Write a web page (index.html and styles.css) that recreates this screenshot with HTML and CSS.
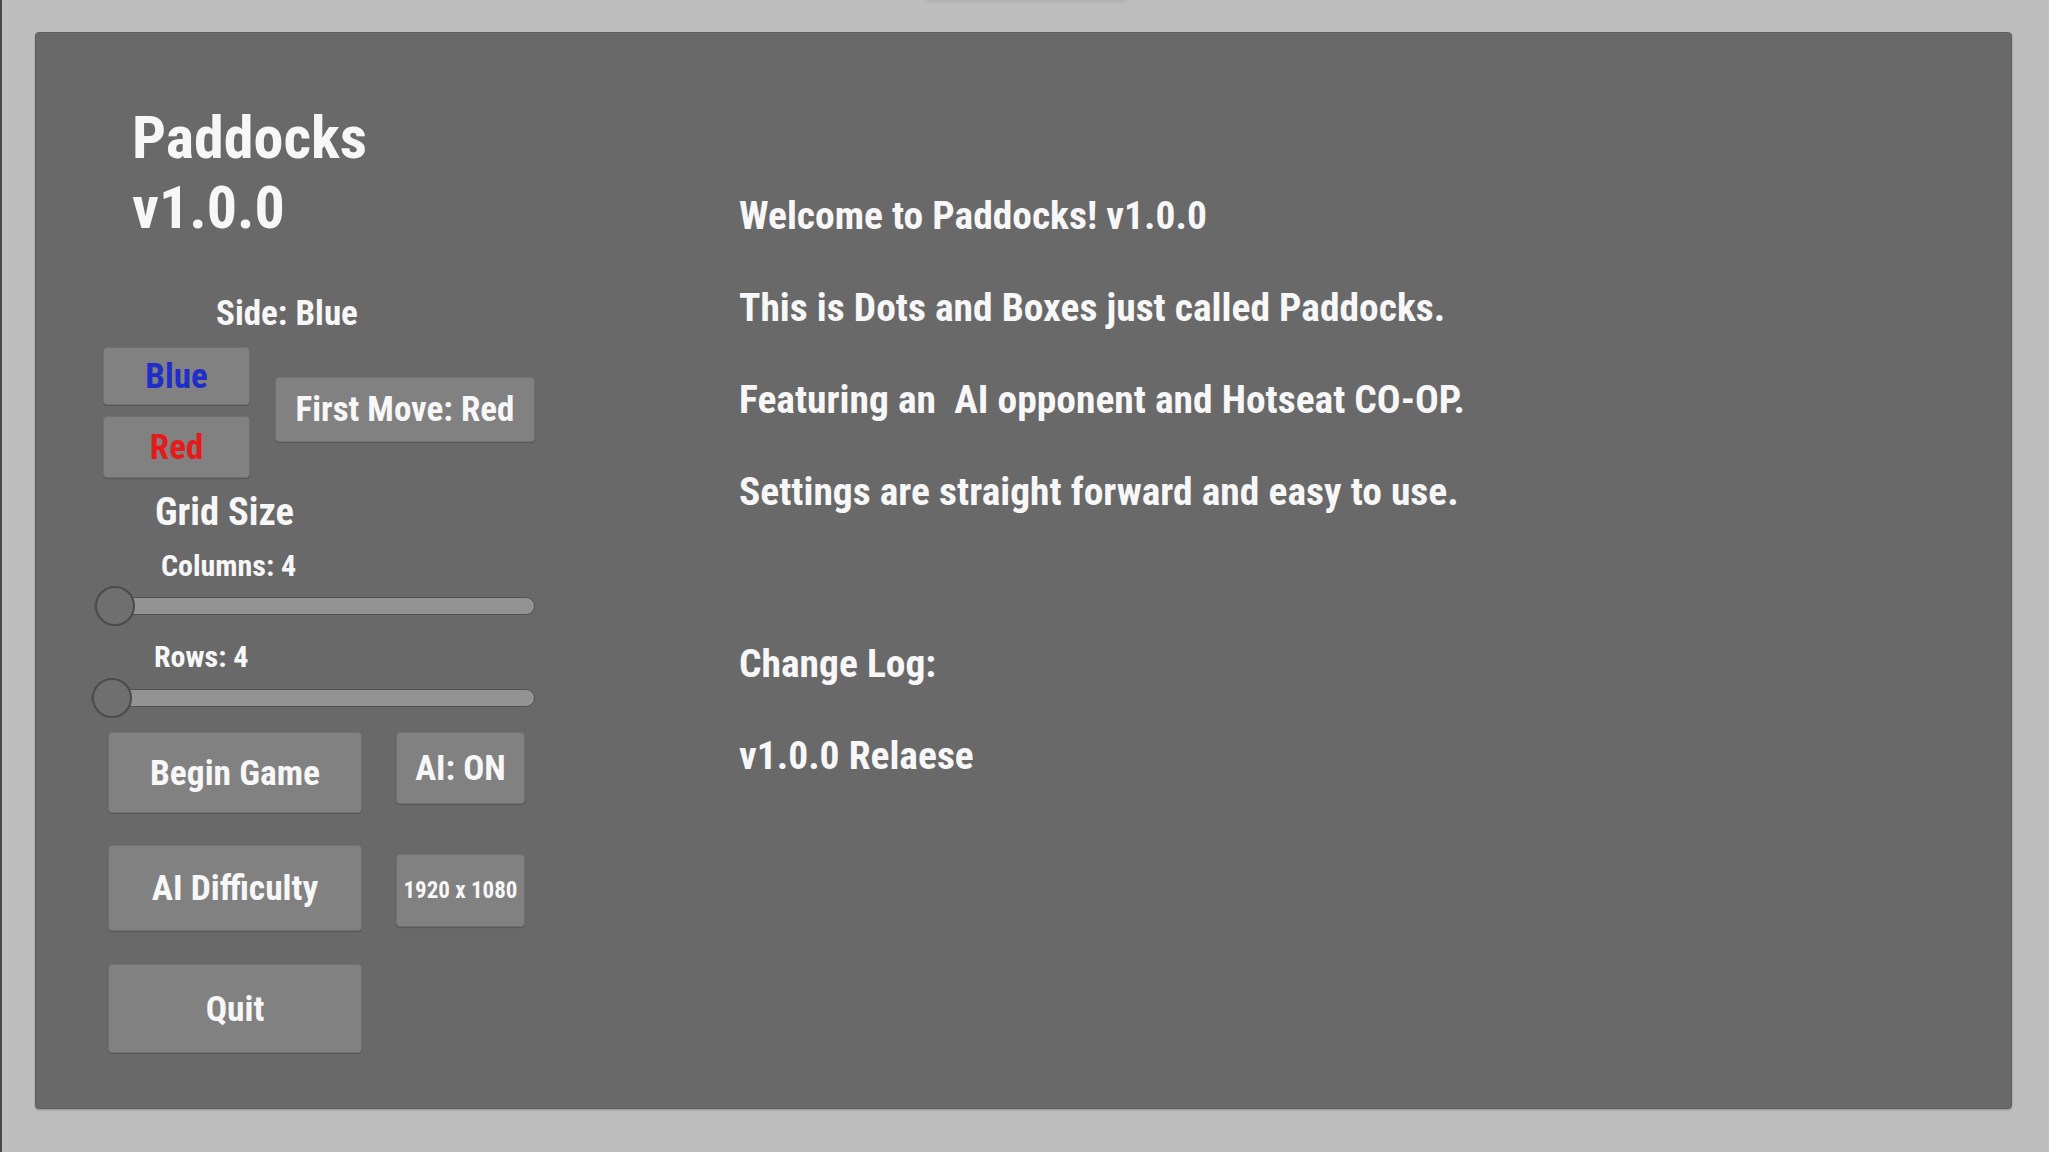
FILE: index.html
```html
<!DOCTYPE html>
<html lang="en">
<head>
    <meta charset="UTF-8">
    <meta name="viewport" content="width=device-width, initial-scale=1.0">
    <title>Paddocks</title>
    <link rel="stylesheet" href="styles.css">
</head>
<body>
    <div class="screen">
        <!-- Main Menu Panel -->
        <div class="menu-panel">
            <!-- Settings Column -->
            <div class="settings">
                <h1 class="title">Paddocks<br>v1.0.0</h1>

                <div class="side-label">Side: Blue</div>
                <div class="side-row">
                    <div class="side-buttons">
                        <button class="btn btn-blue">Blue</button>
                        <button class="btn btn-red">Red</button>
                    </div>
                    <button class="btn btn-first">First Move: Red</button>
                </div>

                <div class="grid-label">Grid Size</div>
                <div class="slider-label columns-label">Columns: 4</div>
                <input class="slider slider-columns" type="range" min="4" max="12" value="4">
                <div class="slider-label rows-label">Rows: 4</div>
                <input class="slider slider-rows" type="range" min="4" max="12" value="4">

                <div class="action-grid">
                    <button class="btn btn-big btn-begin">Begin Game</button>
                    <button class="btn btn-small btn-ai">AI: ON</button>
                    <button class="btn btn-big btn-difficulty">AI Difficulty</button>
                    <button class="btn btn-small btn-res">1920 x 1080</button>
                    <button class="btn btn-big btn-quit">Quit</button>
                </div>
            </div>

            <!-- Welcome Text -->
            <div class="info">
                <p>Welcome to Paddocks! v1.0.0</p>
                <p>This is Dots and Boxes just called Paddocks.</p>
                <p>Featuring an &nbsp;AI opponent and Hotseat CO-OP.</p>
                <p>Settings are straight forward and easy to use.</p>
                <p class="changelog">Change Log:</p>
                <p>v1.0.0 Relaese</p>
            </div>
        </div>
    </div>
</body>
</html>
```

FILE: styles.css
```css
/* Basic Reset */
* {
    box-sizing: border-box;
    margin: 0;
    padding: 0;
}

html {
    background-color: #ffffff;
}

body {
    font-family: "Roboto Condensed", Roboto, "Liberation Sans", sans-serif;
    font-weight: 700;
    color: #f7f7f7;
    overflow: hidden;
}

/* Window background */
.screen {
    position: relative;
    width: 2049px;
    height: 1152px;
    background-color: #bebebe;
    border-left: 2px solid #4a4a4a;
    padding: 32px 37px 0 33px;
}

/* shadow of the tab above the window */
.screen::before {
    content: "";
    position: absolute;
    top: -8px;
    left: 925px;
    width: 200px;
    height: 8px;
    box-shadow: 0 1px 5px rgba(0, 0, 0, 0.12);
}

/* Main Panel */
.menu-panel {
    display: flex;
    align-items: flex-start;
    width: 1977px;
    height: 1077px;
    background-color: #696969;
    border: 1px solid #5e5e5e;
    border-radius: 4px;
    box-shadow: 0 1px 2px rgba(0, 0, 0, 0.25);
    padding: 70px 0 0 55px;
}

/* Settings Column */
.settings {
    width: 444px;
    display: flex;
    flex-direction: column;
    align-items: flex-start;
}

.title {
    font-size: 60px;
    line-height: 70px;
    font-weight: 700;
    margin-left: 41px;
}

.side-label {
    font-size: 35px;
    line-height: 40px;
    margin: 51px 0 0 125px;
}

.side-row {
    display: flex;
    align-items: flex-start;
    margin: 13px 0 0 12px;
}

.side-buttons {
    display: flex;
    flex-direction: column;
    gap: 11px;
}

/* Buttons */
.btn {
    font-family: inherit;
    font-weight: 700;
    font-size: 35px;
    color: #f7f7f7;
    background-color: #818181;
    border: 1px solid #717171;
    border-radius: 4px;
    box-shadow: 0 1px 1px rgba(0, 0, 0, 0.18);
    display: flex;
    align-items: center;
    justify-content: center;
    cursor: pointer;
}

.btn-blue {
    width: 147px;
    height: 58px;
    color: #1f2ecb;
}

.btn-red {
    width: 147px;
    height: 62px;
    color: #e51b1b;
}

.btn-first {
    width: 260px;
    height: 65px;
    margin: 30px 0 0 25px;
}

.grid-label {
    font-size: 38.5px;
    line-height: 44px;
    margin: 12px 0 0 64px;
}

.slider-label {
    font-size: 30px;
    line-height: 34px;
}

.columns-label {
    margin: 15px 0 0 70px;
}

.rows-label {
    margin: 14px 0 0 63px;
}

/* Sliders */
.slider {
    -webkit-appearance: none;
    appearance: none;
    height: 40px;
    background: transparent;
}

.slider-columns {
    width: 441px;
    margin: 3px 0 0 3px;
}

.slider-rows {
    width: 444px;
    margin: 4px 0 0 0;
}

.slider::-webkit-slider-runnable-track {
    height: 18px;
    background-color: #939393;
    border: 1px solid #525252;
    border-radius: 9px;
}

.slider::-webkit-slider-thumb {
    -webkit-appearance: none;
    box-sizing: border-box;
    width: 40px;
    height: 40px;
    margin-top: -12px;
    border-radius: 50%;
    background-color: #6f6f6f;
    border: 2px solid #4b4b4b;
}

/* Action Buttons */
.action-grid {
    display: grid;
    grid-template-columns: 254px 129px;
    column-gap: 34px;
    row-gap: 32px;
    align-items: start;
    margin: 14px 0 0 17px;
}

.btn-big {
    height: 81px;
    font-size: 35.5px;
}

.btn-small {
    height: 72px;
    font-size: 35px;
}

.btn-difficulty {
    height: 86px;
}

.btn-res {
    height: 73px;
    margin-top: 9px;
    font-size: 23px;
}

.btn-quit {
    height: 89px;
    margin-top: 1px;
}

/* Welcome Text */
.info {
    margin: 67px 0 0 204px;
}

.info p {
    font-size: 39.5px;
    line-height: 92px;
}

.info .changelog {
    margin-top: 80px;
}
```
